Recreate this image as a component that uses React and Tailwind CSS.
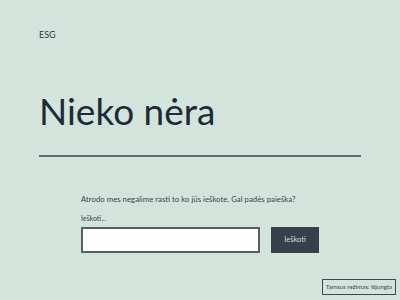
export default function App() {
  return (
    <div
      className="relative min-h-screen w-[400px] h-[300px] overflow-hidden bg-[#d3e4dd] text-[#27323d]"
      style={{ fontFamily: 'Lato, "Noto Sans", sans-serif' }}
    >
      <div className="px-[39px] pt-[29px]">
        <div className="text-[9px] leading-[12px] text-[#2c3a44]">ESG</div>

        <h1 className="mt-[48px] text-[37px] leading-[44px] font-normal text-[#1f2a36]">
          Nieko nėra
        </h1>

        <div className="mt-[22px] h-[2px] w-[322px] bg-[#5a6c68]" />

        <div className="pl-[42px] pt-[36px]">
          <p className="text-[7.8px] leading-[12px] text-[#37464a]">
            Atrodo mes negalime rasti to ko jūs ieškote. Gal padės paieška?
          </p>

          <label className="mt-[8px] block text-[7px] leading-[10px] text-[#37464a]">
            Ieškoti...
          </label>

          <div className="mt-[4px] flex items-center gap-[11px]">
            <input
              type="text"
              className="h-[26px] w-[179px] border-2 border-[#56615f] bg-white outline-none"
            />
            <button
              type="button"
              className="h-[26px] w-[48px] bg-[#363f4b] text-[7.5px] text-[#d6dde0]"
            >
              Ieškoti
            </button>
          </div>
        </div>
      </div>

      <button
        type="button"
        className="absolute right-[4px] bottom-[5px] flex h-[16px] w-[74px] items-center justify-center whitespace-nowrap border border-[#3e4a4a] text-[6.2px] text-[#37464a]"
      >
        Tamsus režimas: Išjungta
      </button>
    </div>
  );
}
